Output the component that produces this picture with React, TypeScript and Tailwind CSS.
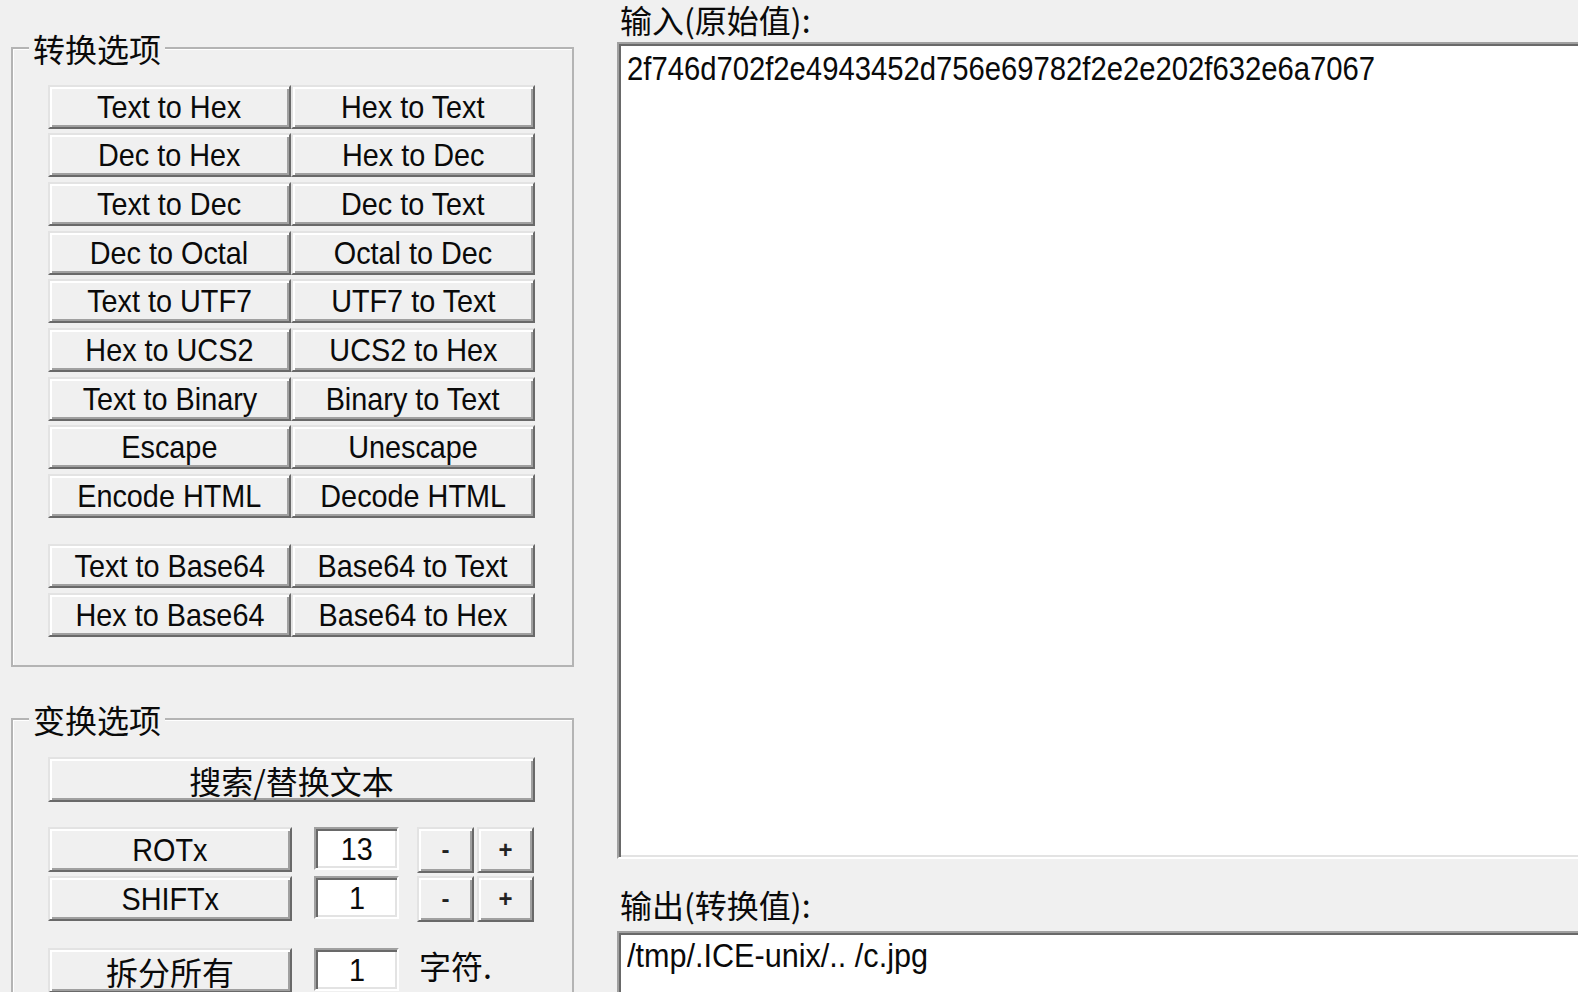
import React from "react";

const raised =
  "border-2 border-t-[#e3e3e3] border-l-[#e3e3e3] border-b-[#696969] border-r-[#696969] bg-[#f0f0f0] shadow-[inset_2px_2px_0_#ffffff,inset_-2px_-2px_0_#a0a0a0] flex items-center justify-center overflow-hidden";
const sunken =
  "border-2 border-t-[#a0a0a0] border-l-[#a0a0a0] border-b-white border-r-white bg-white shadow-[inset_2px_2px_0_#696969,inset_-2px_-2px_0_#e3e3e3]";

const latin = "font-['Liberation_Sans',Arial,sans-serif]";
const cjk = "font-['Noto_Sans_CJK_SC','Liberation_Sans',sans-serif]";

function Btn({ label, cls }: { label: string; cls: string }) {
  return (
    <div className={`${raised} ${cls}`}>
      <span
        className={`inline-block whitespace-nowrap scale-x-[0.9] text-[32px] leading-none text-[#0a0a0a] ${latin}`}
      >
        {label}
      </span>
    </div>
  );
}

function CjkBtn({ label, cls }: { label: string; cls: string }) {
  return (
    <div className={`${raised} ${cls}`}>
      <span className={`whitespace-nowrap text-[32px] leading-[40px] text-[#0a0a0a] ${cjk}`}>{label}</span>
    </div>
  );
}

function Group({
  label,
  cls,
  children,
}: {
  label: string;
  cls: string;
  children: React.ReactNode;
}) {
  return (
    <div className={`relative border-2 border-[#b4b4b4] shadow-[inset_1px_1px_0_#ffffff] ${cls}`}>
      <span
        className={`absolute -top-[21px] left-[16px] px-[4px] h-[40px] bg-[#f0f0f0] text-[32px] leading-[40px] text-[#0a0a0a] ${cjk}`}
      >
        {label}
      </span>
      {children}
    </div>
  );
}

function NumField({ v }: { v: string }) {
  return (
    <div className={`${sunken} w-[85px] h-[43px] flex items-center justify-center`}>
      <span className={`inline-block scale-x-[0.9] text-[32px] leading-none text-[#0a0a0a] ${latin}`}>{v}</span>
    </div>
  );
}

function SmallBtn({ label }: { label: string }) {
  return (
    <div className={`${raised} w-[57px] h-[46px]`}>
      <span className={`text-[24px] leading-none font-bold text-[#222] ${latin}`}>{label}</span>
    </div>
  );
}

const conv: [string, string][] = [
  ["Text to Hex", "Hex to Text"],
  ["Dec to Hex", "Hex to Dec"],
  ["Text to Dec", "Dec to Text"],
  ["Dec to Octal", "Octal to Dec"],
  ["Text to UTF7", "UTF7 to Text"],
  ["Hex to UCS2", "UCS2 to Hex"],
  ["Text to Binary", "Binary to Text"],
  ["Escape", "Unescape"],
  ["Encode HTML", "Decode HTML"],
];

const b64: [string, string][] = [
  ["Text to Base64", "Base64 to Text"],
  ["Hex to Base64", "Base64 to Hex"],
];

export default function App() {
  return (
    <div className="w-[1578px] h-[992px] bg-[#f0f0f0] overflow-hidden flex">
      {/* Left column */}
      <div className="w-[617px] shrink-0 pl-[11px] pt-[47px] flex flex-col">
        <Group label="转换选项" cls="w-[563px] h-[620px] shrink-0 pl-[35px] pt-[35.5px]">
          <div className="grid grid-cols-[243px_244px] gap-x-0 gap-y-[4.7px]">
            {conv.map(([a, b]) => (
              <React.Fragment key={a}>
                <Btn label={a} cls="h-[44px]" />
                <Btn label={b} cls="h-[44px]" />
              </React.Fragment>
            ))}
          </div>
          <div className="grid grid-cols-[243px_244px] gap-x-0 gap-y-[4.5px] mt-[26.4px]">
            {b64.map(([a, b]) => (
              <React.Fragment key={a}>
                <Btn label={a} cls="h-[44px]" />
                <Btn label={b} cls="h-[44px]" />
              </React.Fragment>
            ))}
          </div>
        </Group>

        <Group label="变换选项" cls="mt-[51px] w-[563px] h-[400px] shrink-0 pl-[35px] pt-[37px]">
          <CjkBtn label="搜索/替换文本" cls="w-[487px] h-[45px]" />
          <div className="flex items-start mt-[25px]">
            <Btn label="ROTx" cls="w-[244px] h-[45px]" />
            <div className="ml-[22px]">
              <NumField v="13" />
            </div>
            <div className="ml-[18px] flex gap-[3px]">
              <SmallBtn label="-" />
              <SmallBtn label="+" />
            </div>
          </div>
          <div className="flex items-start mt-[3px]">
            <Btn label="SHIFTx" cls="w-[244px] h-[45px]" />
            <div className="ml-[22px]">
              <NumField v="1" />
            </div>
            <div className="ml-[18px] flex gap-[3px]">
              <SmallBtn label="-" />
              <SmallBtn label="+" />
            </div>
          </div>
          <div className="flex items-start mt-[26px]">
            <CjkBtn label="拆分所有" cls="w-[244px] h-[45px]" />
            <div className="ml-[22px]">
              <NumField v="1" />
            </div>
            <span className={`ml-[20px] -mt-[3px] h-[40px] text-[32px] leading-[40px] text-[#0a0a0a] ${cjk}`}>
              字符.
            </span>
          </div>
        </Group>
      </div>

      {/* Right column */}
      <div className="w-[1000px] shrink-0 flex flex-col">
        <div className={`pl-[3px] h-[38px] text-[32px] leading-[38px] text-[#0a0a0a] ${cjk}`}>输入(原始值):</div>
        <div className={`${sunken} mt-[4px] h-[817px] shrink-0 pl-[8px] pt-[4px]`}>
          <div
            className={`origin-left scale-x-[0.86] whitespace-nowrap text-[34px] leading-[40px] text-[#0a0a0a] ${latin}`}
          >
            2f746d702f2e4943452d756e69782f2e2e202f632e6a7067
          </div>
        </div>
        <div className={`mt-[26px] pl-[3px] h-[38px] text-[32px] leading-[38px] text-[#0a0a0a] ${cjk}`}>
          输出(转换值):
        </div>
        <div className={`${sunken} mt-[8px] h-[200px] shrink-0 pl-[8px] pt-[2px]`}>
          <div
            className={`origin-left scale-x-[0.9] whitespace-nowrap text-[34px] leading-[40px] text-[#0a0a0a] ${latin}`}
          >
            /tmp/.ICE-unix/.. /c.jpg
          </div>
        </div>
      </div>
    </div>
  );
}
